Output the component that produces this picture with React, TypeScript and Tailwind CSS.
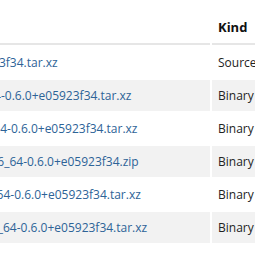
const version = '0.6.0+e05923f34'

const downloads = [
  { file: `zig-${version}.tar.xz`, kind: 'Source', size: '9.3MiB' },
  { file: `zig-linux-x86_64-${version}.tar.xz`, kind: 'Binary', size: '38MiB' },
  { file: `zig-linux-aarch64-${version}.tar.xz`, kind: 'Binary', size: '36MiB' },
  { file: `zig-windows-x86_64-${version}.zip`, kind: 'Binary', size: '47MiB' },
  { file: `zig-macos-x86_64-${version}.tar.xz`, kind: 'Binary', size: '37MiB' },
  { file: `zig-freebsd-x86_64-${version}.tar.xz`, kind: 'Binary', size: '37MiB' },
]

export default function App() {
  return (
    <div className="w-[255px] h-[255px] overflow-hidden bg-white font-['Open_Sans',sans-serif] text-[12px] text-[#222]">
      <table className="ml-[-96px] w-[472px] max-w-none table-fixed border-separate border-spacing-[2px]">
        <colgroup>
          <col className="w-[304px]" />
          <col className="w-[100px]" />
          <col className="w-[60px]" />
        </colgroup>
        <thead>
          <tr>
            <th className="h-[43px] px-1.5 pb-[6px] align-bottom text-left text-[13px] font-bold text-[#111] border-b-2 border-[#e6e6e6]">
              Filename
            </th>
            <th className="h-[43px] px-1.5 pb-[6px] align-bottom text-left text-[13px] font-bold text-[#111] border-b-2 border-[#e6e6e6]">
              Kind
            </th>
            <th className="h-[43px] px-1.5 pb-[6px] align-bottom text-left text-[13px] font-bold text-[#111] border-b-2 border-[#e6e6e6]">
              Size
            </th>
          </tr>
        </thead>
        <tbody>
          {downloads.map((d, i) => (
            <tr key={d.file} className={i % 2 === 1 ? 'bg-[#f2f2f2]' : 'bg-white'}>
              <td className="h-[31px] px-1.5 py-0 align-middle whitespace-nowrap">
                <a href="#" className="text-[#2d6397]">{d.file}</a>
              </td>
              <td className="h-[31px] px-1.5 py-0 align-middle">{d.kind}</td>
              <td className="h-[31px] px-1.5 py-0 align-middle">{d.size}</td>
            </tr>
          ))}
        </tbody>
      </table>
    </div>
  )
}
